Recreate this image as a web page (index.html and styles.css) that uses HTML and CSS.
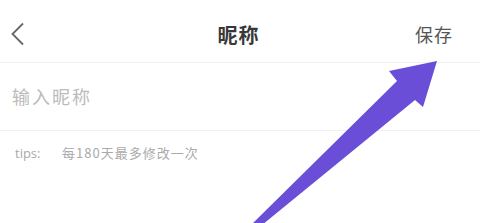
FILE: index.html
```html
<!DOCTYPE html>
<html lang="zh-CN">
<head>
    <meta charset="UTF-8">
    <meta name="viewport" content="width=device-width, initial-scale=1.0">
    <title>昵称</title>
    <link rel="stylesheet" href="styles.css">
</head>
<body>
    <div class="page">
        <div class="header">
            <div class="back">
                <svg width="16" height="24" viewBox="0 0 16 24">
                    <polyline points="13,1.5 2.5,12 13,22.5" fill="none" stroke="#666" stroke-width="1.8"/>
                </svg>
            </div>
            <div class="title">昵称</div>
            <div class="save">保存</div>
        </div>

        <div class="input-row">
            <input class="nick-input" type="text" placeholder="输入昵称">
        </div>

        <div class="tips">
            <span class="tips-label">tips:</span>
            <span class="tips-text">每180天最多修改一次</span>
        </div>

        <svg class="arrow" width="480" height="223" viewBox="0 0 480 223">
            <polygon points="437,61 389,71 397,81 251,225 262,225 415,100 423,107" fill="#6b4ed8"/>
        </svg>
    </div>
</body>
</html>
```

FILE: styles.css
```css
body {
    margin: 0;
    background: #fff;
    font-family: "Noto Sans CJK SC", "Noto Sans", sans-serif;
    overflow: hidden;
}

.page {
    position: relative;
    width: 480px;
    height: 223px;
}

.header {
    display: flex;
    align-items: center;
    justify-content: space-between;
    height: 63px;
    padding: 6px 27px 0 10px;
    border-bottom: 1px solid #f1f1f1;
    box-sizing: border-box;
}

.back {
    display: flex;
    width: 40px;
}

.title {
    font-size: 20px;
    font-weight: bold;
    color: #383838;
    letter-spacing: 1px;
    margin-left: 12px;
}

.save {
    font-size: 18px;
    color: #555;
    letter-spacing: 1px;
}

.input-row {
    display: flex;
    align-items: center;
    height: 68px;
    padding: 0 12px 2px;
    border-bottom: 1px solid #f1f1f1;
    box-sizing: border-box;
}

.nick-input {
    border: none;
    outline: none;
    padding: 0;
    font-family: inherit;
    font-size: 18px;
    letter-spacing: 2px;
    width: 300px;
    background: transparent;
}

.nick-input::placeholder {
    color: #bbb;
}

.tips {
    display: flex;
    align-items: center;
    padding: 12px 15px;
    color: #aaa;
    font-size: 13px;
}

.tips-label {
    font-family: "Open Sans", sans-serif;
    width: 47px;
}

.tips-text {
    letter-spacing: 1px;
}

.arrow {
    position: absolute;
    left: 0;
    top: 0;
}
```
